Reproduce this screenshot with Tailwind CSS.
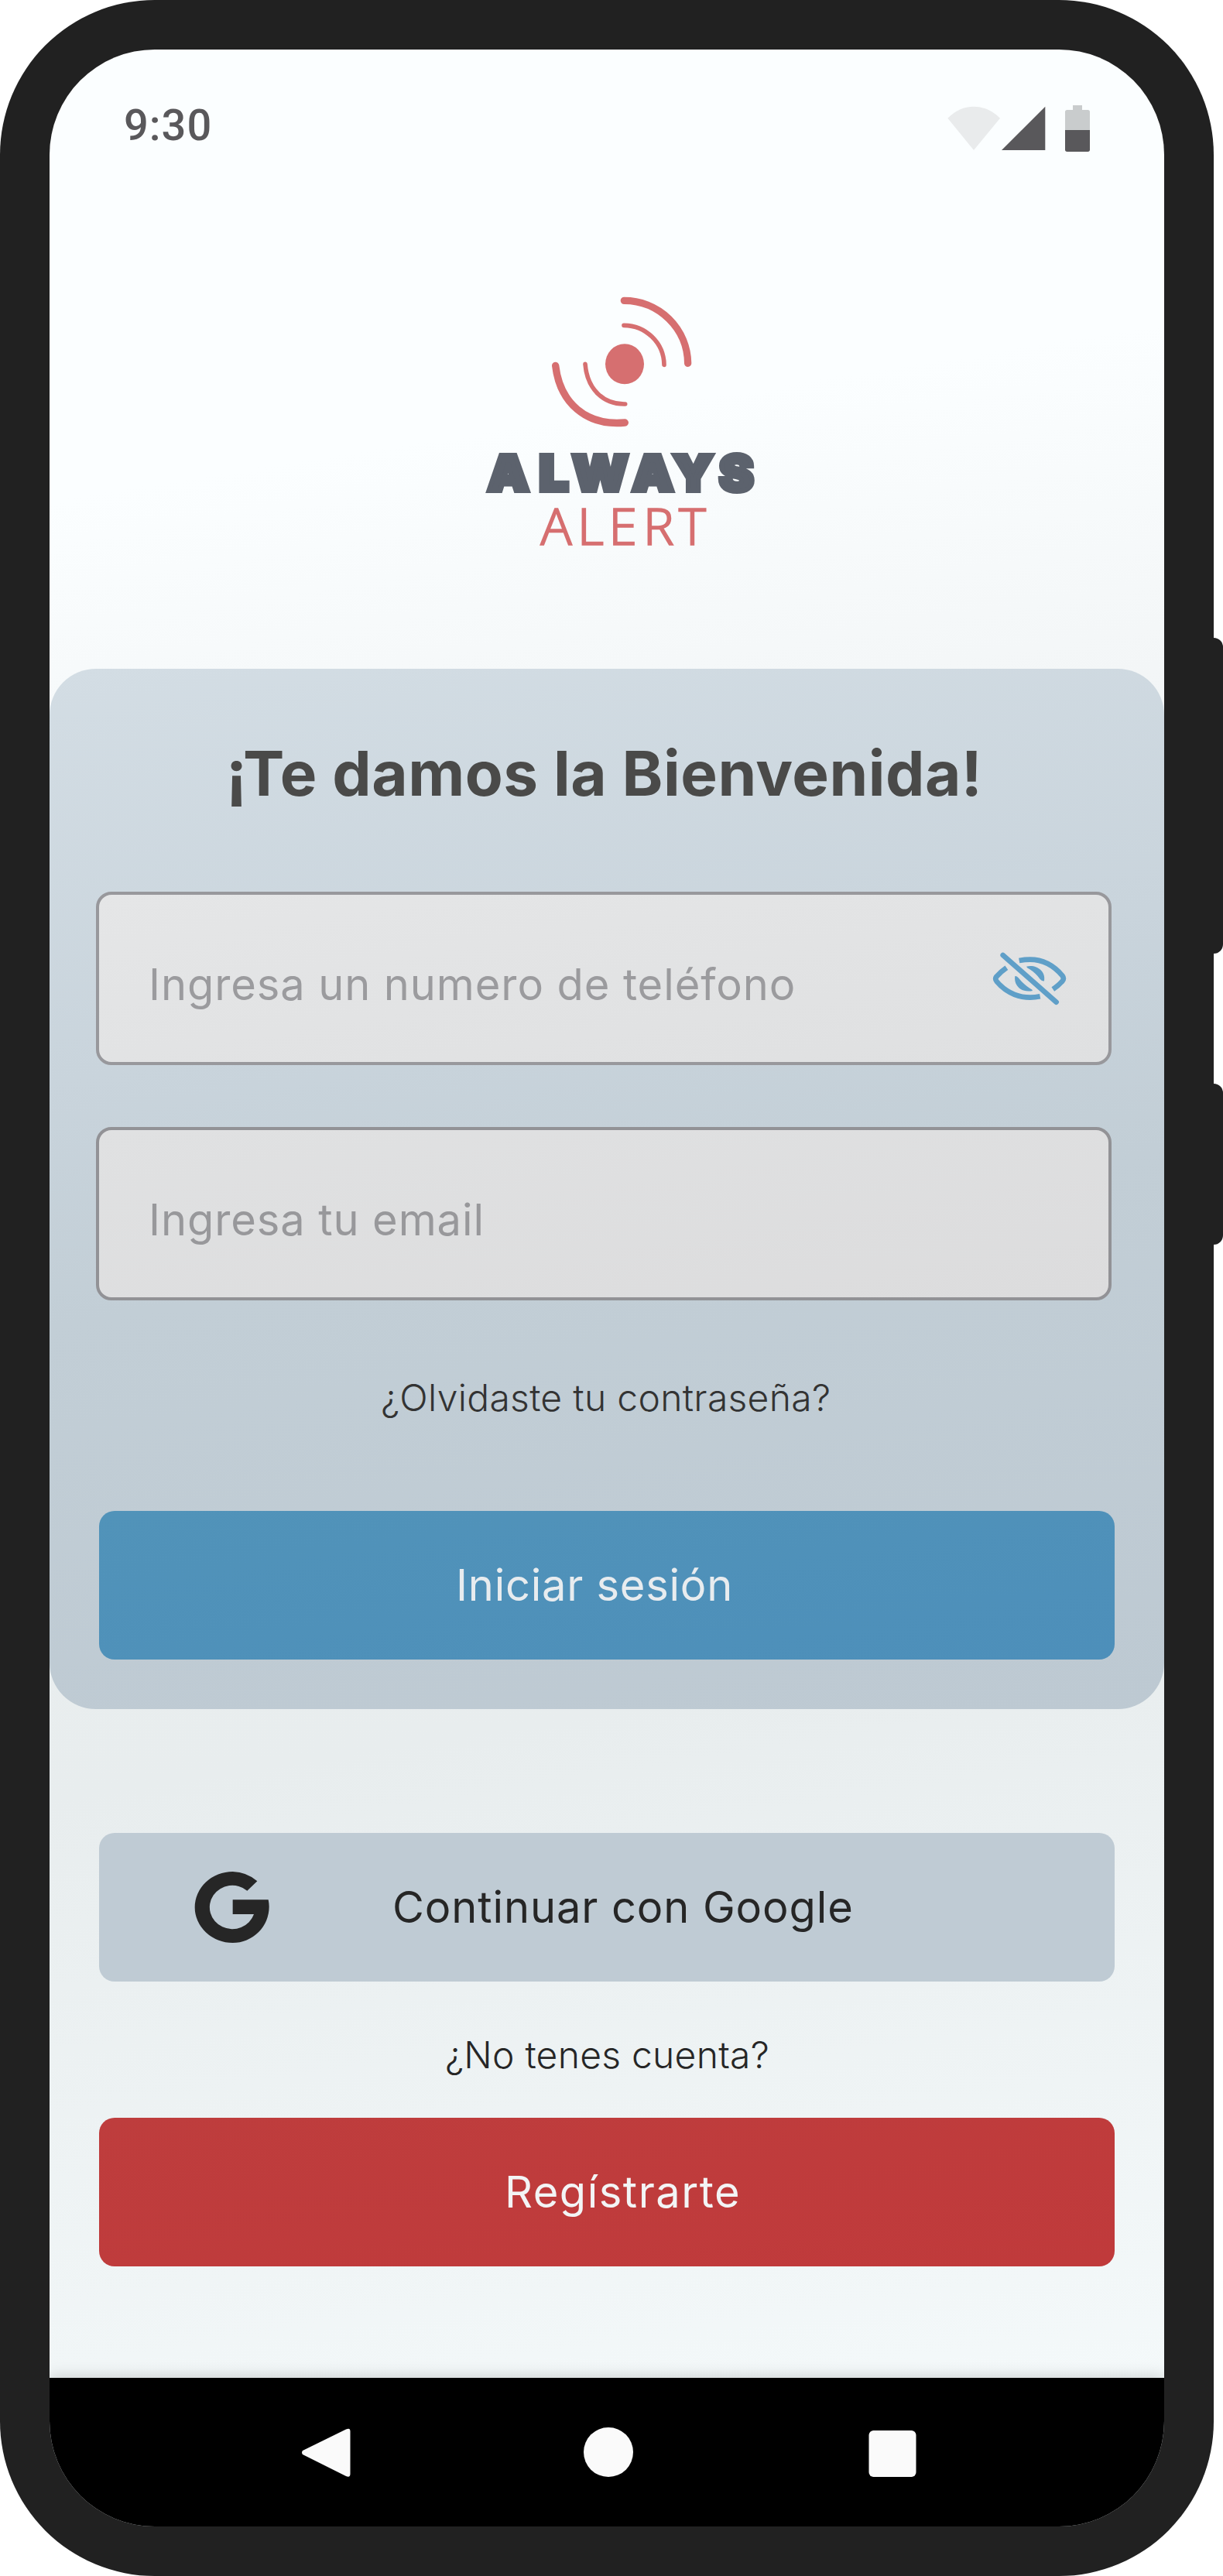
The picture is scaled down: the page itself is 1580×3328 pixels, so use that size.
<!DOCTYPE html>
<html lang="es">
<head>
<meta charset="utf-8">
<meta name="viewport" content="width=device-width">
<title>Always Alert</title>
<script src="https://cdn.jsdelivr.net/npm/@tailwindcss/browser@4"></script>
</head>
<body class="bg-white font-['Inter',sans-serif]">
<div class="relative h-[3328px] w-[1580px] overflow-hidden">
  <!-- side keys -->
  <div class="absolute top-[824px] right-0 h-[408px] w-10 rounded-r-[12px] bg-[#212121]"></div>
  <div class="absolute top-[1400px] right-0 h-[208px] w-10 rounded-r-[12px] bg-[#212121]"></div>

  <div class="relative h-full w-[1568px] rounded-[200px] bg-[#212121] p-16">
    <main class="flex h-full flex-col overflow-hidden rounded-[136px] bg-[linear-gradient(171deg,#fbfeff_17%,#f3f6f7_30%,#ebefef_48%,#e8edee_66%,#f5fafb_97%)]">

      <header class="flex h-[192px] shrink-0 items-center justify-between pr-[92px] pl-[96px]">
        <span class="pt-[3px] font-['Roboto',sans-serif] text-[56px] leading-[64px] font-medium tracking-[1px] text-[#59585b]">9:30</span>
        <svg class="mt-3 h-16 w-[190px]" viewBox="126 102 570 192">
          <path d="M234 282L133 158Q178 113 234 113Q291 113 336 158Z" fill="#e9ebec"/>
          <path d="M342 282L511 113V282Z" fill="#59585b"/>
          <path d="M588 204V134Q588 126 596 126H618V108H654V126H676Q684 126 684 134V204Z" fill="#c9cccd"/>
          <path d="M588 204H684V280Q684 288 676 288H596Q588 288 588 280Z" fill="#59585b"/>
        </svg>
      </header>

      <div class="flex h-[608px] shrink-0 pt-[104px] pl-[536px]">
        <svg class="h-[370px] w-[400px]" viewBox="0 0 1200 1110">
          <g fill="none" stroke="#d66f70" stroke-linecap="round">
            <path d="M619 85A247 246 0 0 1 866 328" stroke-width="28"/>
            <path d="M618 181A157 155 0 0 1 774 334" stroke-width="17"/>
            <path d="M353 337C370 480 470 572 622 558" stroke-width="28"/>
            <path d="M468 331C476 430 540 488 623 486" stroke-width="17"/>
          </g>
          <ellipse cx="621" cy="331" rx="75" ry="78" fill="#d66f70"/>
          <g transform="scale(1.05 1)">
            <text x="86 276 398 619 770 940" y="821" font-family="Inter, sans-serif" font-weight="900" font-size="191" fill="#5c626d" stroke="#5c626d" stroke-width="18">ALWAYS</text>
          </g>
          <text x="295 437 559 692 830" y="1032" font-family="'Noto Sans', sans-serif" font-weight="300" font-size="200" fill="#d66f70" stroke="#d66f70" stroke-width="5">ALERT</text>
        </svg>
      </div>

      <section class="flex h-[1344px] shrink-0 flex-col rounded-[60px] bg-[linear-gradient(171deg,#d3dde4_0%,#c9d4dc_34%,#c2ced6_54%,#bdc9d2_100%)] pt-[87px]">
        <h1 class="pl-[228px] text-[80px] leading-[96px] font-bold tracking-[0.5px] whitespace-nowrap text-[#4a4a49]">¡Te damos la Bienvenida!</h1>

        <div class="mt-[105px] ml-[60px] flex h-56 w-[1312px] items-center justify-between rounded-[20px] border-4 border-[#98989c] bg-[linear-gradient(171deg,#e5e6e7,#dfe0e1)] pr-[52px] pl-16">
          <span class="pt-[15px] text-[56px] leading-[68px] tracking-[0.9px] text-[#9b9b9e]">Ingresa un numero de teléfono</span>
          <svg class="h-[74px] w-[100px]" viewBox="120 320 300 222">
            <g fill="none" stroke="#5f9fc8" stroke-width="20" stroke-linejoin="round">
              <path d="M167 341L374 523" stroke-linecap="round"/>
              <path d="M230 362Q252 358 272 358C325 358 368 386 397 420Q406 432 397 442Q382 459 361 473"/>
              <path d="M181 390Q158 406 142 424Q135 433 143 443C178 485 235 516 311 501"/>
            </g>
            <path d="M258 385C296 376 334 402 327 441Q318 443 311 434Q295 411 270 395Q260 390 258 385Z" fill="#5f9fc8"/>
            <path d="M214 422C208 460 240 488 282 479Q282 474 272 470Q245 452 227 429Q220 421 214 422Z" fill="#5f9fc8"/>
          </svg>
        </div>

        <div class="mt-20 ml-[60px] flex h-56 w-[1312px] items-center rounded-[20px] border-4 border-[#929296] bg-[linear-gradient(171deg,#e0e1e2,#dcdcdd)] pl-16">
          <span class="pt-[15px] text-[56px] leading-[68px] tracking-[0.9px] text-[#98989b]">Ingresa tu email</span>
        </div>

        <a class="mt-[97px] pl-[428px] text-[48px] leading-[58px] font-light tracking-[0.3px] text-[#333]">¿Olvidaste tu contraseña?</a>

        <button class="mt-[117px] ml-16 flex h-48 w-[1312px] items-center rounded-[20px] bg-[linear-gradient(171deg,#5193b9,#4d8fba)] pl-[461px] text-[56px] leading-[68px] tracking-[0.75px] text-[#e8ecef]">Iniciar sesión</button>
      </section>

      <button class="mt-40 ml-16 flex h-48 w-[1312px] shrink-0 items-center rounded-[20px] bg-[#bfcbd4] pl-[123px] text-[56px] leading-[68px] tracking-[0.9px] text-[#262626]">
        <svg class="h-[92px] w-[98px]" viewBox="63 54 294 276" fill="#262626">
          <path d="M307 91L268 128A88 84.5 0 1 0 294 219H212V163H350Q353 178 353 190A141 140 0 0 1 212 330A147 138 0 0 1 212 54A146 138 0 0 1 307 91Z"/>
        </svg>
        <span class="pl-[158px]">Continuar con Google</span>
      </button>

      <p class="mt-[66px] pl-[511px] text-[48px] leading-[58px] font-light tracking-[0.25px] text-[#262626]">¿No tenes cuenta?</p>

      <button class="mt-[52px] ml-16 flex h-48 w-[1312px] shrink-0 items-center rounded-[20px] bg-[linear-gradient(171deg,#be3d3d,#c03a3b)] pl-[524px] text-[56px] leading-[68px] tracking-[1.5px] text-[#f3f4f5]">Regístrarte</button>

      <nav class="relative mt-auto h-48 shrink-0 bg-black shadow-[0_-2px_18px_rgba(0,0,0,0.16)]">
        <svg class="h-full w-full" viewBox="64 3072 1440 192" fill="#fafafa">
          <path d="M391 3166L447 3138.500Q452.500 3136 452.500 3141V3196Q452.500 3201.500 447 3199L391 3171Q389 3168.500 391 3166Z"/>
          <circle cx="786" cy="3168" r="32"/>
          <rect x="1122.500" y="3140" width="61" height="60" rx="6"/>
        </svg>
      </nav>
    </main>
  </div>
</div>
</body>
</html>
